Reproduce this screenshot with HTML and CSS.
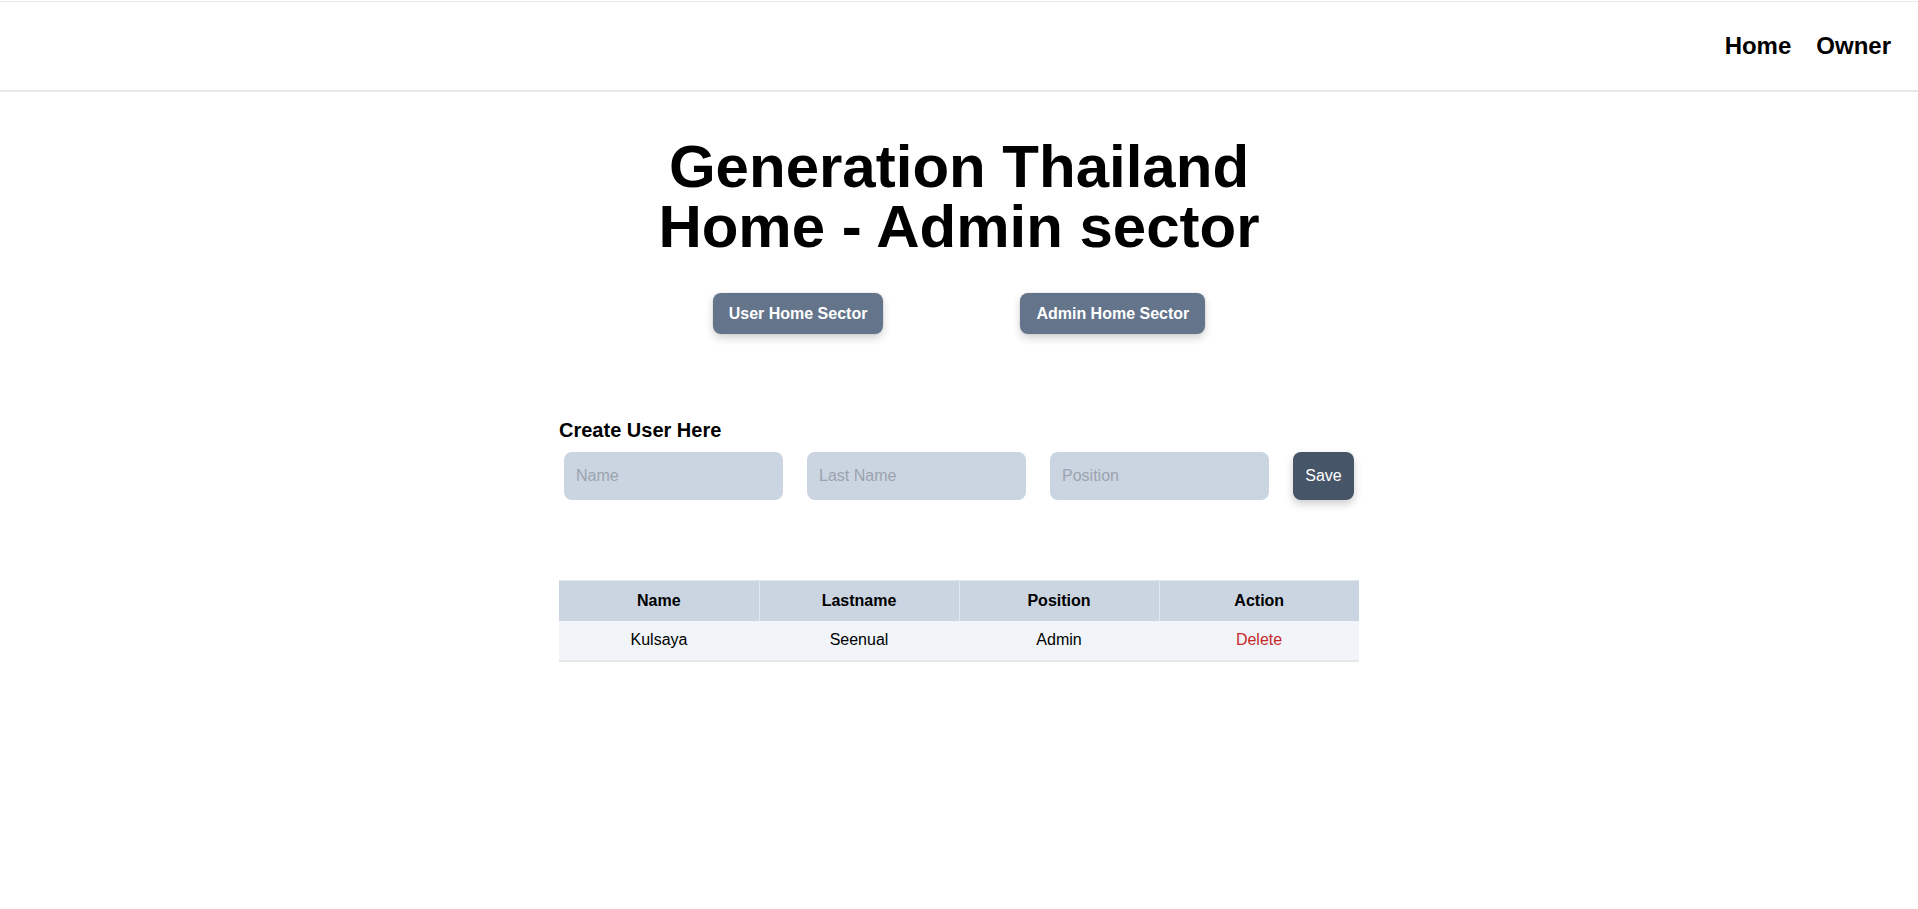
FILE: index.html
```html
<!DOCTYPE html>
<html lang="en">
<head>
<meta charset="utf-8">
<title>Generation Thailand - Admin</title>
<link rel="stylesheet" href="styles.css">
</head>
<body>
<nav class="nav">
  <a class="nav-link" href="#">Home</a>
  <a class="nav-link" href="#">Owner</a>
</nav>
<main class="main">
  <h1 class="title"><span class="title-line">Generation Thailand</span><span class="title-line">Home - Admin sector</span></h1>
  <div class="sector-buttons">
    <button class="sector-btn">User Home Sector</button>
    <button class="sector-btn">Admin Home Sector</button>
  </div>
  <section class="panel">
    <h2 class="panel-title">Create User Here</h2>
    <form class="form-row">
      <input class="field" type="text" placeholder="Name">
      <input class="field" type="text" placeholder="Last Name">
      <input class="field" type="text" placeholder="Position">
      <button class="save-btn" type="button">Save</button>
    </form>
    <table class="users">
      <thead>
        <tr><th>Name</th><th>Lastname</th><th>Position</th><th>Action</th></tr>
      </thead>
      <tbody>
        <tr><td>Kulsaya</td><td>Seenual</td><td>Admin</td><td><span class="delete">Delete</span></td></tr>
      </tbody>
    </table>
  </section>
</main>
</body>
</html>
```

FILE: styles.css
```css
* { box-sizing: border-box; }
html, body { margin: 0; padding: 0; background: #ffffff; }
body {
  font-family: "Liberation Sans", Arial, sans-serif;
  color: #000;
}
.nav {
  margin-top: 1px;
  border-top: 1px solid #e5e7eb;
  border-bottom: 2px solid #e5e7eb;
  height: 91px;
  display: flex;
  justify-content: flex-end;
  align-items: center;
  gap: 25px;
  padding: 0 27px 0 0;
}
.nav-link {
  font-size: 24px;
  font-weight: bold;
  color: #000;
  text-decoration: none;
  line-height: 32px;
}
.main {
  display: flex;
  flex-direction: column;
  align-items: center;
}
.title {
  margin: 44px 0 0;
  font-size: 60px;
  line-height: 60px;
  font-weight: bold;
  text-align: center;
  display: flex;
  flex-direction: column;
  align-items: center;
}
.title-line {
  display: block;
  height: 60px;
  line-height: 62px;
  overflow: visible;
}
.sector-buttons {
  margin-top: 37px;
  display: flex;
  gap: 137px;
}
.sector-btn {
  font-family: inherit;
  font-size: 16px;
  font-weight: bold;
  line-height: 25px;
  color: #fff;
  background: #64748b;
  border: none;
  border-radius: 8px;
  padding: 8px 16px;
  box-shadow: 0 4px 8px rgba(0,0,0,0.18), 0 0 0 1px rgba(0,0,0,0.04);
}
.panel {
  width: 800px;
  margin-top: 82px;
}
.panel-title {
  margin: 0;
  font-size: 20px;
  line-height: 28px;
  font-weight: bold;
}
.form-row {
  margin: 8px 0 0;
  padding: 0 5px;
  display: flex;
  gap: 24px;
}
.field {
  width: 219px;
  height: 48px;
  border: none;
  border-radius: 8px;
  background: #cbd5e1;
  padding: 0 12px;
  font-family: inherit;
  font-size: 16px;
  color: #000;
  outline: none;
}
.field::placeholder { color: #9ca3af; }
.save-btn {
  width: 61px;
  height: 48px;
  border: none;
  border-radius: 8px;
  background: #475569;
  color: #fff;
  font-family: inherit;
  font-size: 16px;
  padding: 0;
  box-shadow: 0 4px 8px rgba(0,0,0,0.2);
}
.users {
  margin-top: 80px;
  width: 800px;
  border-collapse: collapse;
  table-layout: fixed;
  border-top: 1px solid #e2e8f0;
  border-bottom: 2px solid #e5e7eb;
}
.users th {
  background: #cbd5e1;
  font-size: 16px;
  font-weight: bold;
  height: 40px;
  padding: 0;
  border-left: 1px solid #e2e8f0;
  text-align: center;
}
.users th:first-child { border-left: none; }
.users td {
  background: #f1f5f9;
  font-size: 16px;
  height: 40px;
  padding: 0;
  text-align: center;
}
.delete { color: #c62828; }
```
